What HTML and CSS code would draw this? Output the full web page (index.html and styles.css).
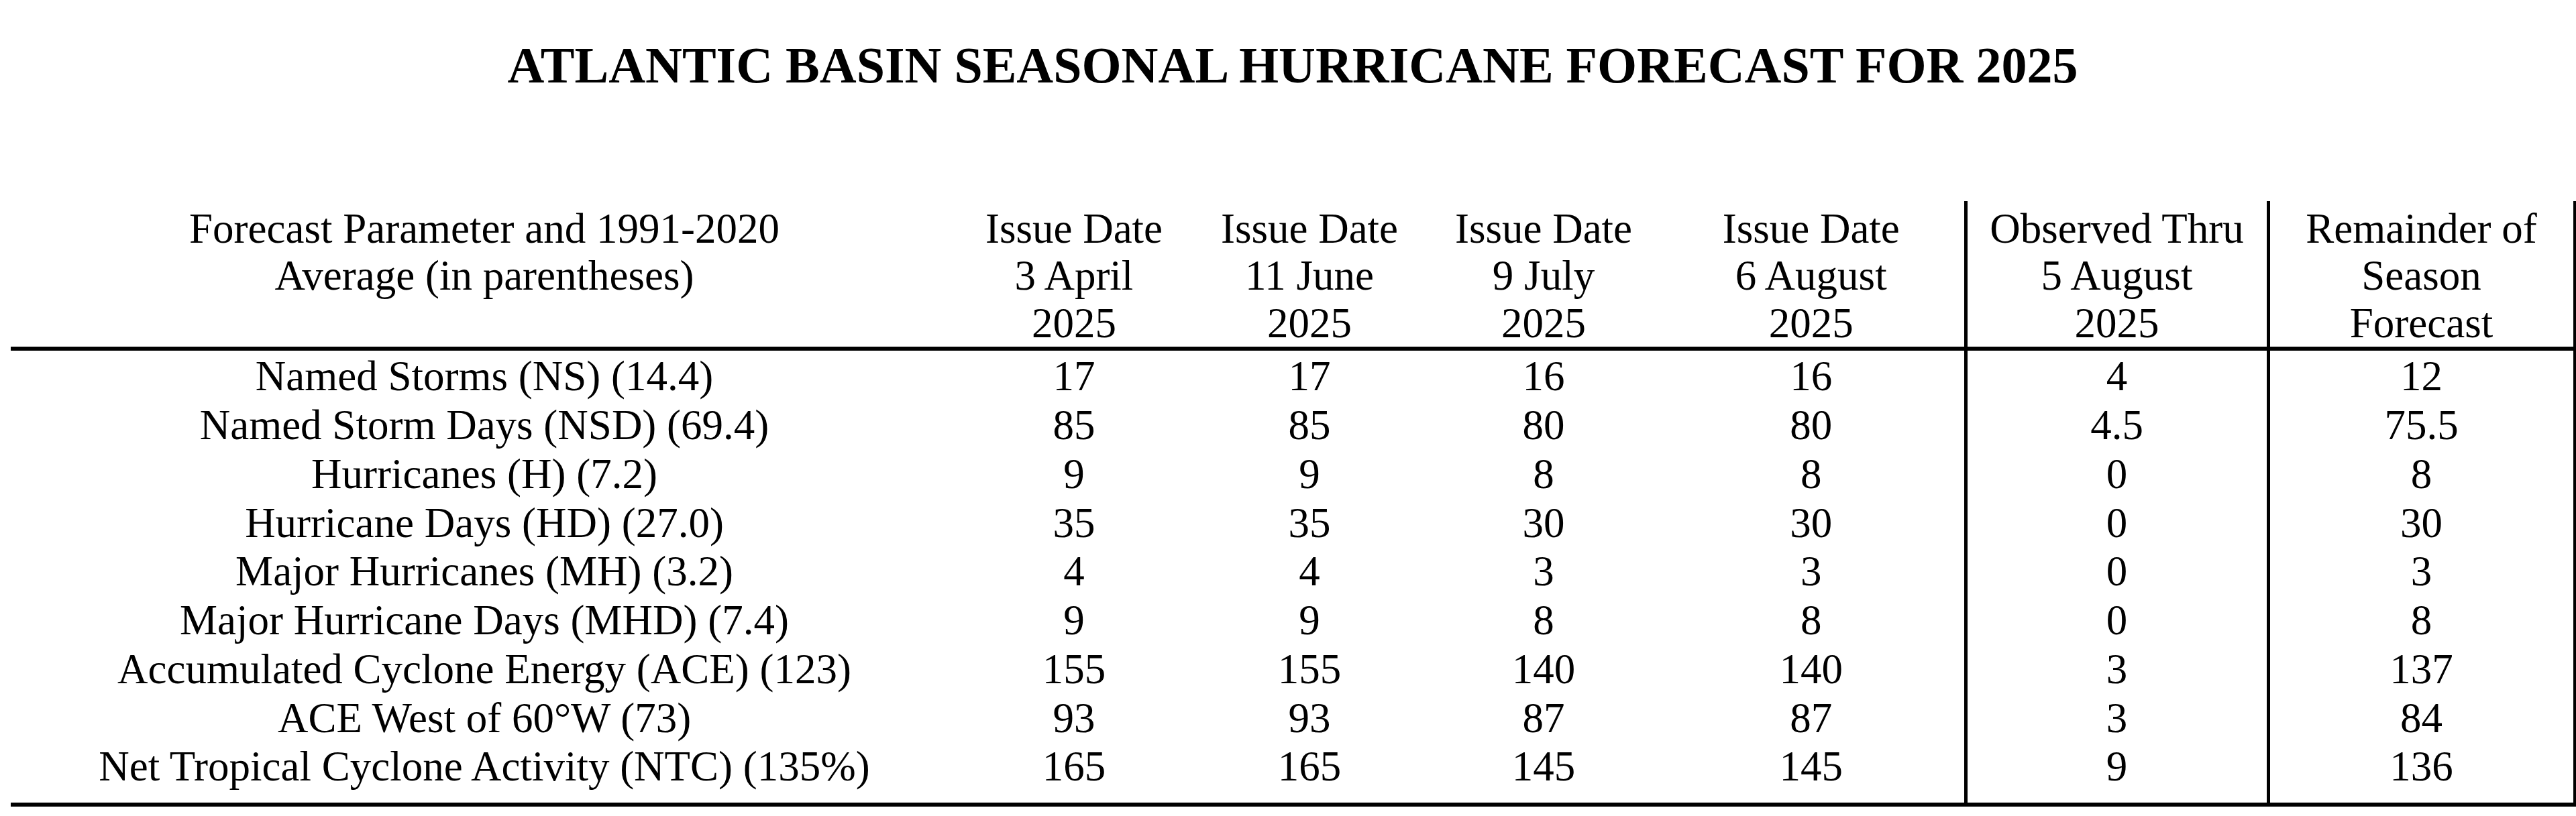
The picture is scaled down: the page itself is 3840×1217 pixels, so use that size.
FILE: index.html
```html
<!DOCTYPE html>
<html lang="en">
<head>
<meta charset="utf-8">
<title>Atlantic Basin Seasonal Hurricane Forecast for 2025</title>
<link rel="stylesheet" href="styles.css">
</head>
<body>
<div class="page">
  <h1 class="title">ATLANTIC BASIN SEASONAL HURRICANE FORECAST FOR 2025</h1>
  <table class="forecast">
    <colgroup>
      <col class="c-param">
      <col class="c-apr">
      <col class="c-jun">
      <col class="c-jul">
      <col class="c-aug">
      <col class="c-obs">
      <col class="c-rem">
    </colgroup>
    <thead>
      <tr>
        <th>Forecast Parameter and 1991-2020<br>Average (in parentheses)</th>
        <th>Issue Date<br>3 April<br>2025</th>
        <th>Issue Date<br>11 June<br>2025</th>
        <th>Issue Date<br>9 July<br>2025</th>
        <th>Issue Date<br>6 August<br>2025</th>
        <th class="ruled">Observed Thru<br>5 August<br>2025</th>
        <th class="ruled">Remainder of<br>Season<br>Forecast</th>
      </tr>
    </thead>
    <tbody>
      <tr><td>Named Storms (NS) (14.4)</td><td>17</td><td>17</td><td>16</td><td>16</td><td class="ruled">4</td><td class="ruled">12</td></tr>
      <tr><td>Named Storm Days (NSD) (69.4)</td><td>85</td><td>85</td><td>80</td><td>80</td><td class="ruled">4.5</td><td class="ruled">75.5</td></tr>
      <tr><td>Hurricanes (H) (7.2)</td><td>9</td><td>9</td><td>8</td><td>8</td><td class="ruled">0</td><td class="ruled">8</td></tr>
      <tr><td>Hurricane Days (HD) (27.0)</td><td>35</td><td>35</td><td>30</td><td>30</td><td class="ruled">0</td><td class="ruled">30</td></tr>
      <tr><td>Major Hurricanes (MH) (3.2)</td><td>4</td><td>4</td><td>3</td><td>3</td><td class="ruled">0</td><td class="ruled">3</td></tr>
      <tr><td>Major Hurricane Days (MHD) (7.4)</td><td>9</td><td>9</td><td>8</td><td>8</td><td class="ruled">0</td><td class="ruled">8</td></tr>
      <tr><td>Accumulated Cyclone Energy (ACE) (123)</td><td>155</td><td>155</td><td>140</td><td>140</td><td class="ruled">3</td><td class="ruled">137</td></tr>
      <tr><td>ACE West of 60°W (73)</td><td>93</td><td>93</td><td>87</td><td>87</td><td class="ruled">3</td><td class="ruled">84</td></tr>
      <tr><td>Net Tropical Cyclone Activity (NTC) (135%)</td><td>165</td><td>165</td><td>145</td><td>145</td><td class="ruled">9</td><td class="ruled">136</td></tr>
    </tbody>
  </table>
</div>
</body>
</html>
```

FILE: styles.css
```css
html, body {
  margin: 0;
  padding: 0;
  background: #ffffff;
}

body {
  color: #000000;
  font-family: "Liberation Serif", "Times New Roman", serif;
}

.page {
  width: 3822px;
  padding: 53px 0 0 16px;
}

.title {
  margin: 0 0 159px 0;
  font-size: 76px;
  line-height: 88px;
  font-weight: bold;
  text-align: center;
}

.forecast {
  width: 3822px;
  table-layout: fixed;
  border-collapse: collapse;
  font-size: 63px;
}

.c-param { width: 1412px; }
.c-apr { width: 346px; }
.c-jun { width: 356px; }
.c-jul { width: 342px; }
.c-aug { width: 458px; }
.c-obs { width: 451px; }
.c-rem { width: 457px; }

.forecast th,
.forecast td {
  padding: 0;
  text-align: center;
  font-weight: normal;
  white-space: nowrap;
}

.forecast th {
  vertical-align: top;
  line-height: 70.5px;
  padding-top: 5.5px;
  border-bottom: 6px solid #000;
}

.forecast td {
  line-height: 72.75px;
}

.forecast tbody tr:first-child td {
  padding-top: 2.4px;
}

.forecast tbody tr:last-child td {
  padding-bottom: 17px;
  border-bottom: 6px solid #000;
}

.forecast .ruled {
  border-left: 5px solid #000;
  border-right: 5px solid #000;
}
```
